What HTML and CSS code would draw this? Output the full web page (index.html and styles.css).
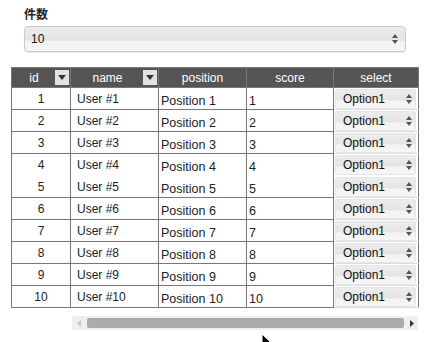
FILE: index.html
```html
<!DOCTYPE html>
<html lang="ja">
<head>
    <meta charset="UTF-8">
    <title>Users</title>
    <link rel="stylesheet" href="styles.css">
</head>
<body>
    <div class="page">
        <div class="field">
            <div class="field-label">件数</div>
            <div class="select select-wide">
                <span class="select-value">10</span>
                <svg class="select-arrows" width="6" height="10" viewBox="0 0 6 10"><path d="M3 0 L6 4 L0 4 Z M0 6 L6 6 L3 10 Z" fill="#555"/></svg>
            </div>
        </div>

        <div class="grid-wrap">
            <table class="grid">
                <colgroup>
                    <col class="col-id">
                    <col class="col-name">
                    <col class="col-pos">
                    <col class="col-score">
                    <col class="col-select">
                </colgroup>
                <thead>
                    <tr>
                        <th class="th-sort"><span class="th-text">id</span><span class="th-btn"><svg width="8" height="5" viewBox="0 0 8 5"><path d="M0 0 L8 0 L4 5 Z" fill="#333"/></svg></span></th>
                        <th class="th-sort"><span class="th-text">name</span><span class="th-btn"><svg width="8" height="5" viewBox="0 0 8 5"><path d="M0 0 L8 0 L4 5 Z" fill="#333"/></svg></span></th>
                        <th>position</th>
                        <th>score</th>
                        <th>select</th>
                    </tr>
                </thead>
                <tbody id="rows"></tbody>
            </table>
        </div>

        <div class="hscroll">
            <svg class="hscroll-arrow" width="4" height="7" viewBox="0 0 4 7"><path d="M4 0 L0 3.5 L4 7 Z" fill="#c8c8c8"/></svg>
            <div class="hscroll-thumb"></div>
            <svg class="hscroll-arrow" width="4" height="7" viewBox="0 0 4 7"><path d="M0 0 L4 3.5 L0 7 Z" fill="#333"/></svg>
        </div>
    </div>

    <svg class="cursor" width="12" height="18" viewBox="0 0 12 18"><path d="M1 1 L1 15 L4.5 11.5 L7 17 L9 16 L6.5 10.5 L11 10.5 Z" fill="#000" stroke="#fff" stroke-width="1"/></svg>

    <script>
        const tbody = document.getElementById('rows');
        for (let i = 1; i <= 10; i++) {
            const tr = document.createElement('tr');
            /* rows 4 and 5 share one block */
            if (i === 4) tr.className = 'joined';
            tr.innerHTML =
                '<td class="td-id">' + i + '</td>' +
                '<td class="td-name">User #' + i + '</td>' +
                '<td class="td-pos">Position ' + i + '</td>' +
                '<td class="td-score">' + i + '</td>' +
                '<td class="td-select"><div class="select select-cell"><span class="select-value">Option1</span>' +
                '<svg class="select-arrows" width="6" height="10" viewBox="0 0 6 10"><path d="M3 0 L6 4 L0 4 Z M0 6 L6 6 L3 10 Z" fill="#555"/></svg></div></td>';
            tbody.appendChild(tr);
        }
    </script>
</body>
</html>
```

FILE: styles.css
```css
* {
    margin: 0;
    padding: 0;
    box-sizing: border-box;
}

body {
    font-family: 'Liberation Sans', Arial, 'Noto Sans CJK JP', sans-serif;
    font-size: 12px;
    color: #222;
    background: #fff;
    width: 440px;
    height: 342px;
    overflow: hidden;
    position: relative;
}

.page {
    padding: 6px 0 0 11px;
}

/* count selector */
.field {
    padding-left: 13px;
    width: 395px;
}

.field-label {
    font-family: 'Noto Sans CJK JP', sans-serif;
    font-weight: bold;
    font-size: 12px;
    line-height: 16px;
    color: #222;
    margin-bottom: 4px;
}

.select {
    display: flex;
    align-items: center;
    justify-content: space-between;
    border: 1px solid #c9c9c9;
    border-radius: 4px;
    background: linear-gradient(#ececec 0%, #e4e4e4 55%, #f3f3f3 60%, #f6f6f6 100%);
    box-shadow: 0 1px 1px rgba(0, 0, 0, 0.08);
    color: #111;
}

.select-wide {
    height: 26px;
    padding: 0 7px 0 6px;
    font-size: 12px;
}

.select-arrows {
    flex: none;
}

/* data grid */
.grid-wrap {
    margin-top: 15px;
}

.grid {
    border-collapse: collapse;
    table-layout: fixed;
    width: 407px;
    border: 1px solid #777;
}

.col-id { width: 59px; }
.col-name { width: 88px; }
.col-pos { width: 88px; }
.col-score { width: 87px; }
.col-select { width: 85px; }

.grid th {
    background: #555;
    color: #fff;
    font-weight: normal;
    font-size: 12px;
    height: 20px;
    padding: 0;
    text-align: center;
    border: 1px solid #777;
    border-top: 0;
}

.th-sort {
    position: relative;
}

.th-text {
    padding-right: 14px;
}

.th-btn {
    position: absolute;
    right: 1px;
    top: 2px;
    width: 14px;
    height: 15px;
    background: #e2e2e2;
    display: flex;
    align-items: center;
    justify-content: center;
}

.grid td {
    height: 22px;
    padding: 0;
    border: 1px solid #777;
    font-size: 12px;
    vertical-align: middle;
    white-space: nowrap;
    overflow: hidden;
}

.grid tr.joined td {
    border-bottom-color: transparent;
}

.td-id {
    text-align: center;
}

.td-name {
    padding-left: 6px !important;
}

.td-pos,
.td-score {
    padding: 5px 0 0 2px !important;
    font-size: 12.5px !important;
}

.grid td.td-select {
    padding: 1px 2px 0 1px;
    border-top-color: #ddd;
    border-bottom-color: #ddd;
}

.select-cell {
    height: 20px;
    border-radius: 2px;
    border-color: #e6e6e6;
    box-shadow: none;
    padding: 0 3px 0 7px;
    font-size: 12px;
}

/* horizontal scrollbar */
.hscroll {
    display: flex;
    align-items: center;
    gap: 6px;
    margin: 8px 0 0 61px;
    width: 346px;
    height: 14px;
    background: #efefef;
    padding: 0 4px 0 5px;
}

.hscroll-thumb {
    flex: 1;
    height: 10px;
    background: #ababab;
    border-radius: 2px;
}

.cursor {
    position: absolute;
    left: 261px;
    top: 333px;
}
```
